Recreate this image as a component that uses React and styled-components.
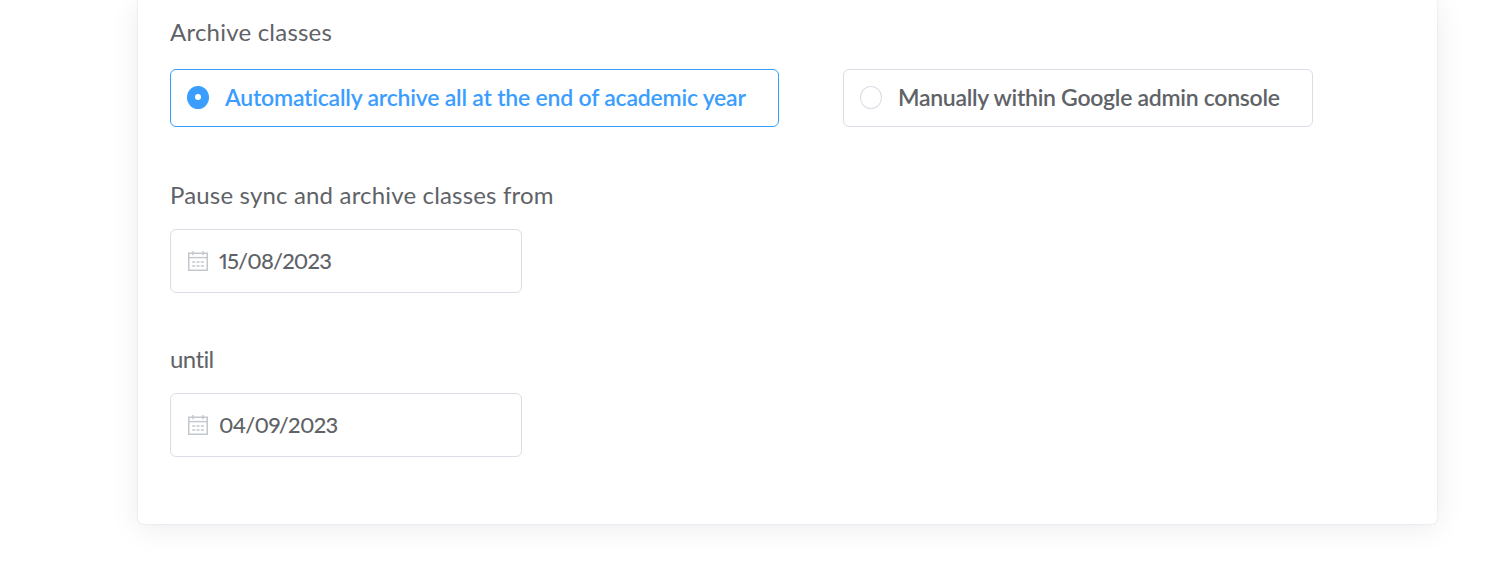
import React from 'react'
import styled, { createGlobalStyle } from 'styled-components'

const CalendarIcon = () => (
  <Icon viewBox='0 0 20 20' fill='none' stroke='#c3c7ce'>
    <rect x='0.75' y='2.25' width='18.5' height='17' strokeWidth='1.5' />
    <path d='M0.6 6.6H19.4' strokeWidth='1.4' />
    <path d='M5 0V4.2M15 0V4.2' strokeWidth='1.4' />
    <path d='M4.2 11H15.8M4.2 15H15.8' strokeWidth='1.5' strokeDasharray='3 1.3' />
  </Icon>
)

const DateField = ({ label, value, labelSpacing, valueSpacing }) => (
  <Field>
    <Label $spacing={labelSpacing}>{label}</Label>
    <DateBox>
      <CalendarIcon />
      <DateText $spacing={valueSpacing}>{value}</DateText>
    </DateBox>
  </Field>
)

const App = () => {
  return (
    <Page>
      <GlobalStyle />
      <Card>
        <Field>
          <Label $spacing='0.22px'>Archive classes</Label>
          <Options>
            <Option $width='609px' $active>
              <Radio $active />
              <OptionText $spacing='-0.21px'>Automatically archive all at the end of academic year</OptionText>
            </Option>
            <Option $width='470px'>
              <Radio />
              <OptionText $spacing='-0.28px'>Manually within Google admin console</OptionText>
            </Option>
          </Options>
        </Field>
        <DateField label='Pause sync and archive classes from' value='15/08/2023' labelSpacing='0.17px' valueSpacing='-0.85px' />
        <DateField label='until' value='04/09/2023' labelSpacing='-0.6px' valueSpacing='-0.7px' />
      </Card>
    </Page>
  )
}

export default App

const GlobalStyle = createGlobalStyle`
  * {
    box-sizing: border-box;
  }
  body {
    margin: 0;
    background: #fff;
    font-family: Lato, "Liberation Sans", sans-serif;
    font-variant-ligatures: none;
  }
`
const Page = styled.div`
  height: 562px;
  padding-left: 138px;
  overflow: hidden;
`
const Card = styled.div`
  width: 1299px;
  height: 524px;
  padding: 15px 32px 0;
  border-radius: 0 0 6px 6px;
  background: #fff;
  box-shadow: 0 0 2px rgba(80, 80, 190, 0.2), 0 4px 30px rgba(0, 0, 0, 0.08);
`
const Field = styled.div`
  display: flex;
  flex-direction: column;
  gap: 17px;
  & + & {
    margin-top: 51px;
  }
  & + & + & {
    margin-top: 49px;
  }
`
const Label = styled.div`
  font-size: 24px;
  line-height: 34px;
  letter-spacing: ${({ $spacing }) => $spacing};
  white-space: nowrap;
  color: #5f6368;
`
const Options = styled.div`
  display: flex;
  gap: 64px;
  margin-top: 3px;
`
const Option = styled.div`
  display: flex;
  align-items: center;
  gap: 16px;
  width: ${({ $width }) => $width};
  height: 58px;
  padding: 0 16px 2px;
  border: 1px solid ${({ $active }) => ($active ? '#3b9eff' : '#dcdde6')};
  border-radius: 6px;
  color: ${({ $active }) => ($active ? '#3b9eff' : '#5f6368')};
`
const Radio = styled.span`
  display: flex;
  align-items: center;
  justify-content: center;
  flex: none;
  width: 22px;
  height: 23px;
  border: 1px solid ${({ $active }) => ($active ? '#3b9eff' : '#dcdde6')};
  border-radius: 50%;
  background: ${({ $active }) => ($active ? '#3b9eff' : '#fff')};
  &::after {
    content: '';
    width: 6px;
    height: 6px;
    border-radius: 50%;
    background: #fff;
  }
`
const OptionText = styled.span`
  font-size: 23px;
  font-weight: 600;
  letter-spacing: ${({ $spacing }) => $spacing};
  white-space: nowrap;
`
const DateBox = styled.div`
  display: flex;
  align-items: center;
  gap: 11px;
  width: 352px;
  height: 64px;
  padding: 0 17px;
  border: 1px solid #dcdde6;
  border-radius: 6px;
`
const DateText = styled.span`
  margin-top: -2px;
  font-size: 22px;
  font-weight: 500;
  font-variant-numeric: proportional-nums;
  letter-spacing: ${({ $spacing }) => $spacing};
  color: #5f6368;
`
const Icon = styled.svg`
  flex: none;
  width: 20px;
  height: 20px;
`
